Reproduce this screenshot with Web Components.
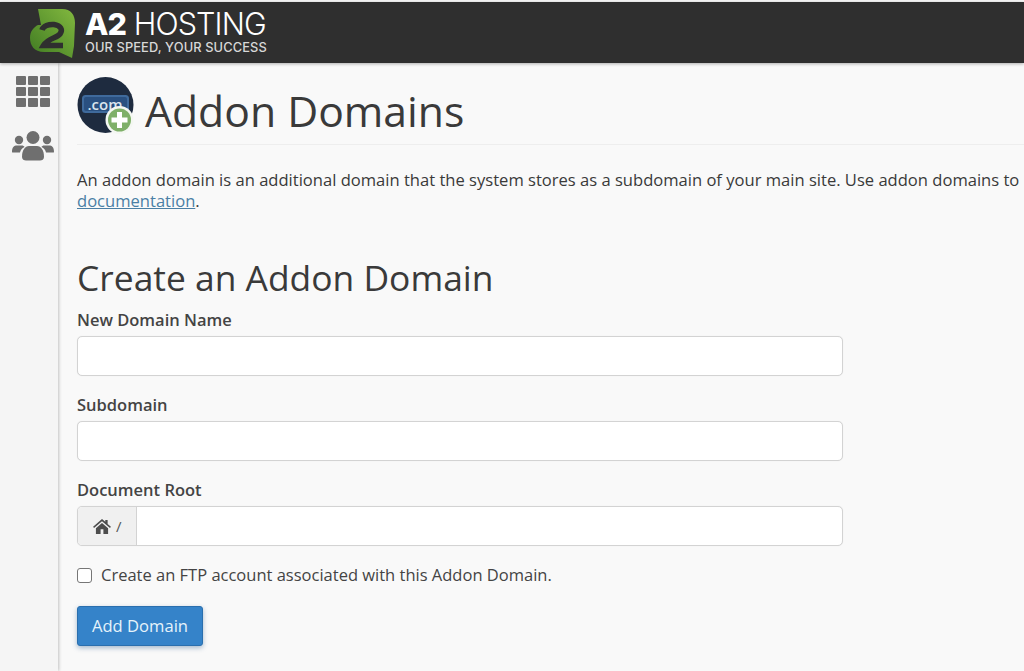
<!DOCTYPE html>
<html lang="en">
<head>
<meta charset="utf-8">
<title>Addon Domains</title>
<style>
html, body { margin: 0; height: 100%; overflow: hidden; background: #f9f9f9; }
body { font-family: "Open Sans", sans-serif; color: #333; }
</style>
</head>
<body>
<app-shell>
  <top-bar slot="top"></top-bar>
  <side-nav slot="side"></side-nav>
  <page-heading title="Addon Domains"></page-heading>
  <intro-text></intro-text>
  <addon-form></addon-form>
</app-shell>
<script>
class AppShell extends HTMLElement {
    constructor() {
        super();
        const shadow = this.attachShadow({ mode: 'open' });
        shadow.innerHTML = `
            <style>
                :host { display: flex; flex-direction: column; height: 671px; width: 1024px; overflow: hidden; }
                .row { display: flex; flex: 1; min-height: 0; }
                main { flex: 1; min-width: 0; padding: 0 0 0 19px; }
            </style>
            <slot name="top"></slot>
            <div class="row">
                <slot name="side"></slot>
                <main><slot></slot></main>
            </div>
        `;
    }
}

class TopBar extends HTMLElement {
    constructor() {
        super();
        const shadow = this.attachShadow({ mode: 'open' });
        shadow.innerHTML = `
            <style>
                :host { display: block; padding-top: 2px; background: #f4f4f4; position: relative; z-index: 2; }
                .bar { height: 61px; background: #2f2f2f; display: flex; align-items: center; padding-left: 28px; box-shadow: 0 1px 3px rgba(0,0,0,.3); }
                svg { width: 48px; height: 56px; flex: none; }
                .text { margin-left: 9px; margin-top: -3px; color: #fff; font-family: Inter, sans-serif; white-space: nowrap; }
                .name { font-size: 30.500px; line-height: 32px; letter-spacing: -.900px; font-weight: 300; }
                .name b { font-weight: 800; }
                .tag { font-size: 12.850px; line-height: 15px; font-weight: 500; color: #d8d8d8; letter-spacing: .1px; }
            </style>
            <div class="bar">
                <svg viewBox="0 0 48 56">
                    <defs><linearGradient id="g" x1="0" y1="1" x2="1" y2="0">
                        <stop offset="0" stop-color="#3f7a22"/><stop offset="1" stop-color="#82b83f"/>
                    </linearGradient></defs>
                    <path fill="url(#g)" d="M10 4 H34 C43 4 47 10 47 18 L46 41 L44 53 L31 47 H16 C6 47 2 40 2 33 C2 26 6 22 10 20 L13 20 Z"/>
                    <path fill="none" stroke="#2f2f2f" stroke-width="5.500" d="M14 25 C15 21 21 19 26 19.500 C33 20.500 35 25 32 29 C29 33 20 33 15.500 40.500 H35"/>
                </svg>
                <div class="text">
                    <div class="name"><b>A2</b> HOSTING</div>
                    <div class="tag">OUR SPEED, YOUR SUCCESS</div>
                </div>
            </div>
        `;
    }
}

class SideNav extends HTMLElement {
    constructor() {
        super();
        const shadow = this.attachShadow({ mode: 'open' });
        let cells = '';
        for (let r = 0; r < 3; r++) {
            for (let c = 0; c < 3; c++) {
                cells += `<rect x="${c * 12}" y="${r * 11}" width="10" height="9" rx="1"/>`;
            }
        }
        shadow.innerHTML = `
            <style>
                :host { display: flex; flex-direction: column; align-items: center; width: 58px; flex: none; background: #f5f5f5; box-shadow: 1px 0 3px rgba(0,0,0,.22); padding-top: 13px; box-sizing: border-box; }
                svg { display: block; fill: #6f6f6f; }
                .users { margin-top: 24px; margin-left: 7px; }
                .apps { margin-left: 7px; }
            </style>
            <svg class="apps" width="34" height="31" viewBox="0 0 34 31">${cells}</svg>
            <svg class="users" width="42" height="30" viewBox="0 0 42 30">
                <circle cx="21" cy="6.500" r="6.500"/>
                <circle cx="7" cy="9" r="4.200"/>
                <circle cx="35" cy="9" r="4.200"/>
                <path d="M0 21 C0 16 2 14.500 5 14.500 H10 C11 14.500 12 15 12.500 16 C10 17 8.500 19 8 21.500 H1 C.5 21.500 0 21.500 0 21 Z"/>
                <path d="M42 21 C42 16 40 14.500 37 14.500 H32 C31 14.500 30 15 29.500 16 C32 17 33.500 19 34 21.500 H41 C41.500 21.500 42 21.500 42 21 Z"/>
                <path d="M10 26 C10 19 13 15 17 15 H25 C29 15 32 19 32 26 C32 28.500 30 29.500 28 29.500 H14 C12 29.500 10 28.500 10 26 Z"/>
            </svg>
        `;
    }
}

class PageHeading extends HTMLElement {
    constructor() {
        super();
        const shadow = this.attachShadow({ mode: 'open' });
        shadow.innerHTML = `
            <style>
                :host { display: flex; align-items: center; height: 81px; border-bottom: 1px solid #eee; }
                svg { flex: none; margin-top: 5px; }
                h1 { margin: 14px 0 0 11px; font-size: 42.700px; line-height: 56px; font-weight: 400; color: #3a3a3a; white-space: nowrap; }
            </style>
            <svg width="57" height="58" viewBox="0 0 57 58">
                <circle cx="28.500" cy="28" r="28" fill="#1e2b3f"/>
                <rect x="5" y="18" width="47" height="18" rx="3.500" fill="#3f6a9c"/>
                <rect x="7" y="20" width="43" height="14" rx="2" fill="#2a5080"/>
                <text x="10.500" y="32.500" font-family="Open Sans" font-size="15" font-weight="600" fill="#dbe5ee">.com</text>
                <circle cx="42.500" cy="43" r="14" fill="#f4f7f2"/>
                <circle cx="42.500" cy="43" r="11.500" fill="#7fb069"/>
                <path d="M40 35 h5 v5.500 h5.500 v5 h-5.500 v5.500 h-5 v-5.500 h-5.500 v-5 h5.500 z" fill="#fff"/>
            </svg>
            <h1></h1>
        `;
        shadow.querySelector('h1').textContent = this.getAttribute('title');
    }
}

class IntroText extends HTMLElement {
    constructor() {
        super();
        const shadow = this.attachShadow({ mode: 'open' });
        shadow.innerHTML = `
            <style>
                :host { display: block; margin-top: 24px; font-size: 16.570px; line-height: 21px; color: #3a3a3a; white-space: nowrap; }
                a { color: #4a7fa5; }
            </style>
            An addon domain is an additional domain that the system stores as a subdomain of your main site. Use addon domains to<br>
            <a href="#">documentation</a>.
        `;
    }
}

class FormField extends HTMLElement {
    constructor() {
        super();
        const shadow = this.attachShadow({ mode: 'open' });
        shadow.innerHTML = `
            <style>
                :host { display: block; width: 765.500px; height: 85px; }
                label { display: block; font-size: 16.500px; font-weight: 600; line-height: 22px; color: #444; height: 27px; }
                .box { display: flex; height: 40px; box-sizing: border-box; border: 1px solid #d3d3d3; border-radius: 5px; background: #fff; overflow: hidden; box-shadow: 0 0 1px rgba(0,0,0,.1); }
                input { flex: 1; min-width: 0; border: 0; outline: 0; background: transparent; }
            </style>
            <label></label>
            <div class="box"><slot></slot><input type="text"></div>
        `;
        shadow.querySelector('label').textContent = this.getAttribute('label');
    }
}

class AddonForm extends HTMLElement {
    constructor() {
        super();
        const shadow = this.attachShadow({ mode: 'open' });
        shadow.innerHTML = `
            <style>
                :host { display: block; }
                h2 { margin: 43px 0 0; font-size: 35.400px; line-height: 46px; font-weight: 400; color: #3a3a3a; white-space: nowrap; height: 46px; }
                .fields { margin-top: 9px; }
                .addon { display: flex; align-items: center; box-sizing: border-box; width: 59px; padding-left: 15px; background: #f0f0f0; border-right: 1px solid #d3d3d3; font-size: 15px; color: #555; gap: 5px; }
                .addon svg { fill: #4d4d4d; display: block; }
                .check { display: flex; align-items: center; margin-top: -4px; height: 28px; font-size: 16.500px; color: #444; }
                .box { width: 15px; height: 15px; box-sizing: border-box; border: 1px solid #767676; border-radius: 3px; background: #fff; margin: 3px 9px 0 0; flex: none; }
                button { display: block; margin-top: 18px; width: 126px; height: 40px; box-sizing: border-box; border: 1px solid #2a6fae; border-radius: 3px; background: #3583c9; color: #e6f3fb; font: 400 16.600px "Open Sans", sans-serif; padding: 0 0 2px; box-shadow: 0 2px 5px rgba(40,90,140,.4); }
            </style>
            <h2>Create an Addon Domain</h2>
            <div class="fields">
                <form-field label="New Domain Name"></form-field>
                <form-field label="Subdomain"></form-field>
                <form-field label="Document Root">
                    <span class="addon">
                        <svg width="18" height="15" viewBox="0 0 19 16"><path d="M9.500 0 L13 3 V1 H15.500 V5.200 L19 8.300 L18 9.500 L9.500 2.300 L1 9.500 L0 8.300 Z M3 9.800 L9.500 4.300 L16 9.800 V16 H11 V11 H8 V16 H3 Z"/></svg>
                        <span>/</span>
                    </span>
                </form-field>
            </div>
            <div class="check"><span class="box"></span>Create an FTP account associated with this Addon Domain.</div>
            <button type="button">Add Domain</button>
        `;
    }
}

customElements.define('app-shell', AppShell);
customElements.define('top-bar', TopBar);
customElements.define('side-nav', SideNav);
customElements.define('page-heading', PageHeading);
customElements.define('intro-text', IntroText);
customElements.define('form-field', FormField);
customElements.define('addon-form', AddonForm);
</script>
</body>
</html>
